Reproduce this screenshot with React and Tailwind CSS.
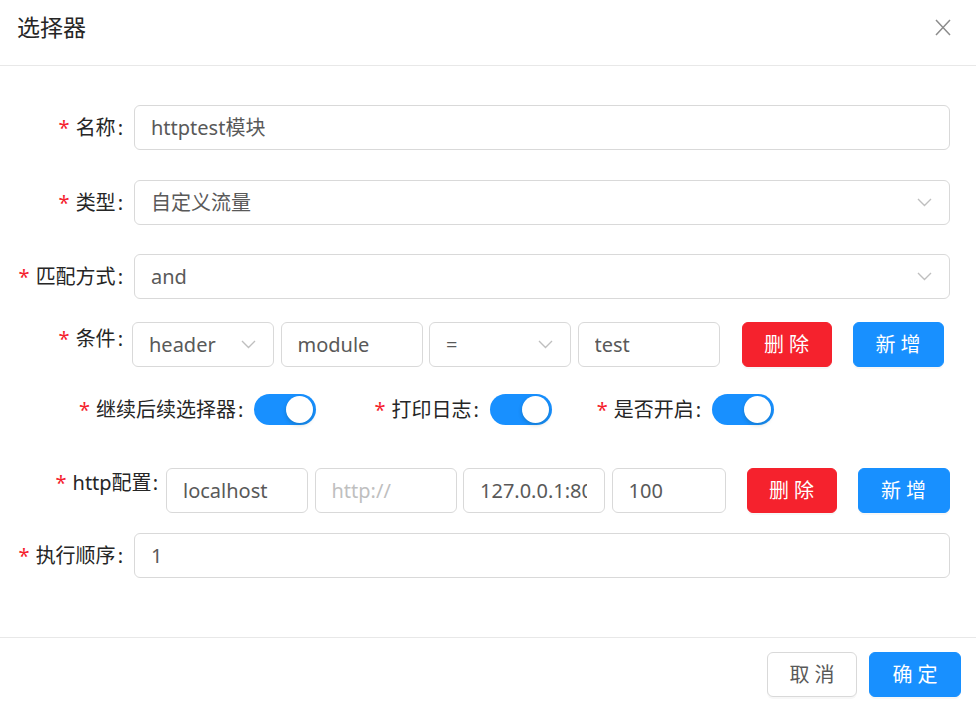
import React from "react";

const FONT = { fontFamily: '"Noto Sans", "Noto Sans CJK SC", sans-serif' };

function Star() {
  return <span className="text-[#f5222d] mr-[6px] text-[20px]">*</span>;
}

function Label({ text }) {
  return (
    <span className="flex items-center text-[20px] text-[#262626] whitespace-nowrap">
      <Star />
      <span>{text}</span>
      <span className="ml-[2px] mr-[11px]">:</span>
    </span>
  );
}

function Chevron() {
  return (
    <svg width="15" height="9" viewBox="0 0 15 9" fill="none" className="shrink-0">
      <path d="M1 1l6.5 6.5L14 1" stroke="#bfbfbf" strokeWidth="1.4" />
    </svg>
  );
}

function Box({ children, className = "", select = false, placeholder = false }) {
  return (
    <div
      className={`h-[45px] border border-[#d9d9d9] rounded-[6px] bg-white pl-[16px] pr-[17px] flex items-center text-[20px] ${
        placeholder ? "text-[#bfbfbf]" : "text-[#595959]"
      } ${className}`}
    >
      <span className="flex-1 overflow-hidden whitespace-nowrap">{children}</span>
      {select && <Chevron />}
    </div>
  );
}

function Btn({ children, kind, className = "" }) {
  const k =
    kind === "danger"
      ? "bg-[#f5222d] border-[#f5222d] text-white"
      : kind === "primary"
      ? "bg-[#1890ff] border-[#1890ff] text-white"
      : "bg-white border-[#d9d9d9] text-[#595959]";
  return (
    <div
      className={`h-[45px] w-[90px] border rounded-[6px] flex items-center justify-center text-[20px] whitespace-pre shadow-[0_2px_0_rgba(0,0,0,0.03)] ${k} ${className}`}
    >
      {children}
    </div>
  );
}

function Switch() {
  return (
    <div className="relative w-[62px] h-[31px] rounded-full bg-[#1890ff] shrink-0">
      <div className="absolute right-[3px] top-[2px] w-[27px] h-[27px] rounded-full bg-white shadow-[0_2px_4px_rgba(0,35,11,0.2)]" />
    </div>
  );
}

function FullRow({ label, children, className = "" }) {
  return (
    <div className={`flex items-center ${className}`}>
      <div className="w-[134px] flex justify-end">
        <Label text={label} />
      </div>
      <div className="flex-1">{children}</div>
    </div>
  );
}

export default function App() {
  return (
    <div className="w-[976px] h-[707px] bg-white flex flex-col" style={FONT}>
      {/* header */}
      <div className="h-[66px] border-b border-[#e8e8e8] flex items-start justify-between pl-[17px] pr-[25px] pt-[11px] shrink-0">
        <div className="text-[23px] leading-[32px] text-[#262626]">选择器</div>
        <svg width="16" height="17" viewBox="0 0 16 17" className="mt-[8px]">
          <path d="M1 1l14 15M15 1L1 16" stroke="#8c8c8c" strokeWidth="1.5" />
        </svg>
      </div>

      {/* body */}
      <div className="flex-1 flex flex-col pr-[26px]">
        <FullRow label="名称" className="mt-[39px]">
          <Box>httptest模块</Box>
        </FullRow>
        <FullRow label="类型" className="mt-[30px]">
          <Box select>自定义流量</Box>
        </FullRow>
        <FullRow label="匹配方式" className="mt-[29px]">
          <Box select>and</Box>
        </FullRow>

        {/* 条件 */}
        <div className="flex items-start mt-[23px]">
          <div className="w-[132px] flex justify-end pt-[3px]">
            <span className="flex items-center text-[20px] text-[#262626] leading-[28px]">
              <Star />
              <span>条件</span>
              <span className="ml-[2px] mr-[9px]">:</span>
            </span>
          </div>
          <div className="flex items-center gap-[6.5px]">
            <Box select className="w-[142px]">header</Box>
            <Box className="w-[142px]">module</Box>
            <Box select className="w-[142px]">=</Box>
            <Box className="w-[142px]">test</Box>
          </div>
          <Btn kind="danger" className="ml-[22px]">删 除</Btn>
          <Btn kind="primary" className="ml-[21px] w-[91px]">新 增</Btn>
        </div>

        {/* switches */}
        <div className="flex items-center mt-[27px] pl-[79px]">
          <Label text="继续后续选择器" />
          <Switch />
          <div className="ml-[58px] flex items-center">
            <Label text="打印日志" />
            <Switch />
          </div>
          <div className="ml-[45px] flex items-center">
            <Label text="是否开启" />
            <Switch />
          </div>
        </div>

        {/* http配置 */}
        <div className="flex items-start mt-[43px]">
          <div className="w-[166px] flex justify-end pt-[1px]">
            <span className="flex items-center text-[20px] text-[#262626] leading-[28px]">
              <Star />
              <span>http配置</span>
              <span className="ml-[1px] mr-[8px]">:</span>
            </span>
          </div>
          <div className="flex items-center gap-[6.5px]">
            <Box className="w-[142px]">localhost</Box>
            <Box placeholder className="w-[142px]">http://</Box>
            <Box className="w-[142px]">127.0.0.1:8080</Box>
            <Box className="w-[114px]">100</Box>
          </div>
          <Btn kind="danger" className="ml-[21px]">删 除</Btn>
          <Btn kind="primary" className="ml-[21px] w-[92px]">新 增</Btn>
        </div>

        <FullRow label="执行顺序" className="mt-[20px]">
          <Box>1</Box>
        </FullRow>
      </div>

      {/* footer */}
      <div className="h-[70px] border-t border-[#e8e8e8] flex items-start justify-end gap-[12px] pr-[15px] pt-[14px] shrink-0">
        <Btn>取 消</Btn>
        <Btn kind="primary" className="w-[92px]">确 定</Btn>
      </div>
    </div>
  );
}
